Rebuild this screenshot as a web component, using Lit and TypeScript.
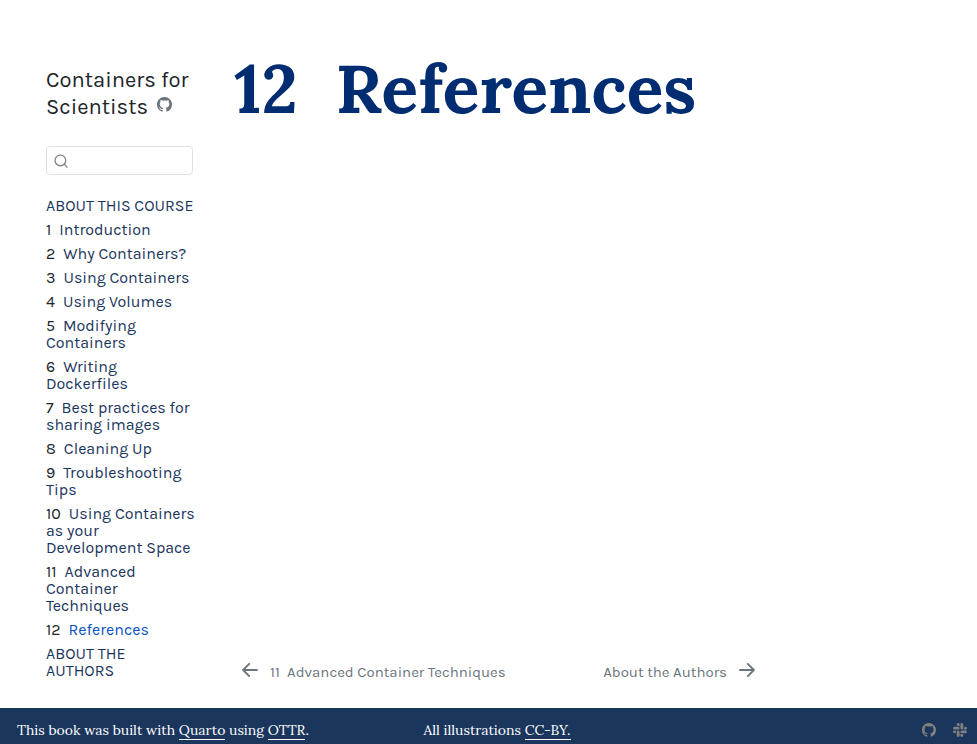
import { LitElement, html, css, svg } from "lit";
import { customElement } from "lit/decorators.js";

interface Chapter {
  num?: string;
  title: string;
  active?: boolean;
}

const chapters: Chapter[] = [
  { title: "ABOUT THIS COURSE" },
  { num: "1", title: "Introduction" },
  { num: "2", title: "Why Containers?" },
  { num: "3", title: "Using Containers" },
  { num: "4", title: "Using Volumes" },
  { num: "5", title: "Modifying Containers" },
  { num: "6", title: "Writing Dockerfiles" },
  { num: "7", title: "Best practices for sharing images" },
  { num: "8", title: "Cleaning Up" },
  { num: "9", title: "Troubleshooting Tips" },
  { num: "10", title: "Using Containers as your Development Space" },
  { num: "11", title: "Advanced Container Techniques" },
  { num: "12", title: "References", active: true },
  { title: "ABOUT THE AUTHORS" },
];

const githubPath = svg`<path d="M8 0C3.58 0 0 3.58 0 8c0 3.54 2.29 6.53 5.47 7.59.4.07.55-.17.55-.38 0-.19-.01-.82-.01-1.49-2.01.37-2.53-.49-2.69-.94-.09-.23-.48-.94-.82-1.13-.28-.15-.68-.52-.01-.53.63-.01 1.08.58 1.23.82.72 1.21 1.87.87 2.33.66.07-.52.28-.87.51-1.07-1.78-.2-3.64-.89-3.64-3.95 0-.87.31-1.59.82-2.15-.08-.2-.36-1.02.08-2.12 0 0 .67-.21 2.2.82.64-.18 1.32-.27 2-.27s1.36.09 2 .27c1.53-1.04 2.2-.82 2.2-.82.44 1.1.16 1.92.08 2.12.51.56.82 1.27.82 2.15 0 3.07-1.87 3.75-3.65 3.95.29.25.54.73.54 1.48 0 1.07-.01 1.93-.01 2.2 0 .21.15.46.55.38A8.01 8.01 0 0 0 16 8c0-4.42-3.58-8-8-8"/>`;
const slackPath = svg`<path d="M3.362 10.11c0 .926-.756 1.681-1.681 1.681S0 11.036 0 10.111.756 8.43 1.68 8.43h1.682zm.846 0c0-.924.756-1.68 1.681-1.68s1.681.756 1.681 1.68v4.21c0 .924-.756 1.68-1.68 1.68a1.685 1.685 0 0 1-1.682-1.68zM5.89 3.362c-.926 0-1.682-.756-1.682-1.681S4.964 0 5.89 0s1.68.756 1.68 1.68v1.682zm0 .846c.924 0 1.68.756 1.68 1.681S6.814 7.57 5.89 7.57H1.68C.757 7.57 0 6.814 0 5.89c0-.926.756-1.682 1.68-1.682zm6.749 1.682c0-.926.755-1.682 1.68-1.682S16 4.964 16 5.889s-.756 1.681-1.68 1.681h-1.681zm-.848 0c0 .924-.755 1.68-1.68 1.68A1.685 1.685 0 0 1 8.43 5.89V1.68C8.43.757 9.186 0 10.11 0c.926 0 1.681.756 1.681 1.68zm-1.681 6.748c.926 0 1.682.756 1.682 1.681S11.036 16 10.11 16s-1.681-.756-1.681-1.68v-1.682h1.68zm0-.847c-.924 0-1.68-.755-1.68-1.68s.756-1.681 1.68-1.681h4.21c.924 0 1.68.756 1.68 1.68 0 .926-.756 1.681-1.68 1.681z"/>`;
const leftPath = svg`<path fill="none" stroke="currentColor" stroke-width="1.9" stroke-linecap="round" stroke-linejoin="round" d="M15 8H1.6M7.2 1.9 1.1 8l6.1 6.1"/>`;
const rightPath = svg`<path fill="none" stroke="currentColor" stroke-width="1.9" stroke-linecap="round" stroke-linejoin="round" d="M1 8h13.4M8.8 1.9 14.9 8l-6.1 6.1"/>`;
const searchPath = svg`<g fill="none" stroke="currentColor" stroke-width="1.5" stroke-linecap="round"><circle cx="7.3" cy="7.3" r="6.1"/><path d="M11.8 11.8 15 15"/></g>`;

const icon = (body: unknown) =>
  html`<svg class="icon" viewBox="0 0 16 16" aria-hidden="true">${body}</svg>`;

@customElement("app-root")
export class AppRoot extends LitElement {
  static styles = css`
    :host {
      display: flex;
      flex-direction: column;
      min-height: 100vh;
      background: #fff;
      color: #212529;
      font-family: Karla, Roboto, sans-serif;
      font-size: 16px;
    }
    * {
      box-sizing: border-box;
    }
    a {
      color: inherit;
      text-decoration: none;
    }
    .icon {
      display: block;
      width: 15px;
      height: 15px;
      fill: currentColor;
    }
    .layout {
      flex: 1;
      display: grid;
      grid-template-columns: 150px minmax(0, 528px);
      column-gap: 38px;
      padding: 0 46px;
    }
    .sidebar {
      padding: 67px 0 28px;
    }
    .brand {
      font-size: 22px;
      line-height: 27px;
      margin-bottom: 25px;
    }
    .tool {
      display: inline-block;
      vertical-align: 2px;
      margin-left: 4px;
      color: #6c757d;
    }
    .search {
      display: flex;
      align-items: center;
      height: 29px;
      padding: 0 7px;
      border: 1px solid #dee2e6;
      border-radius: 4px;
      color: #828282;
      margin: 0 3px 22px 0;
    }
    .search .icon {
      flex: none;
      width: 14px;
      height: 14px;
    }
    .search input {
      min-width: 0;
      flex: 1;
      border: 0;
      outline: 0;
      background: none;
      font: inherit;
    }
    .chapters {
      list-style: none;
      margin: 0;
      padding: 0;
      display: flex;
      flex-direction: column;
      gap: 7px;
      line-height: 17px;
    }
    .chapters a {
      color: #1b365d;
    }
    .chapters .active {
      color: #0a53be;
    }
    .chapters .num {
      color: #212529;
      margin-right: 8px;
    }
    .content {
      display: flex;
      flex-direction: column;
      justify-content: space-between;
    }
    h1 {
      margin: 41px 0 0;
      color: #002d72;
      font: 700 68px/96px Lora, "Liberation Serif", serif;
      white-space: nowrap;
    }
    h1 .chapter {
      margin-right: 38px;
    }
    .pager {
      display: flex;
      justify-content: space-between;
      padding: 0 7px 26px 8px;
      color: #6c757d;
      font-size: 15px;
      line-height: 20px;
    }
    .pager a {
      display: flex;
      gap: 12px;
    }
    .pager .icon {
      width: 16px;
      height: 16px;
    }
    .footer {
      display: grid;
      grid-template-columns: 1fr auto 1fr;
      min-height: 36px;
      padding: 12px 0 4px 17px;
      background: #1b365d;
      color: #fff;
      font: 14px/20px Lora, "Liberation Serif", serif;
    }
    .footer .link {
      border-bottom: 1px solid #fff;
    }
    .social {
      display: flex;
      justify-content: flex-end;
      gap: 17px;
      padding: 3px 10px 0 0;
      color: #808080;
    }
    .social .icon {
      width: 14px;
      height: 14px;
    }
  `;

  render() {
    return html`
      <div class="layout">
        <nav class="sidebar" aria-label="Chapters">
          <div class="brand">
            <a href="#">Containers for Scientists</a>
            <a class="tool" href="#" aria-label="Source Code">${icon(githubPath)}</a>
          </div>
          <label class="search">
            ${icon(searchPath)}
            <input type="text" aria-label="Search" />
          </label>
          <ul class="chapters">
            ${chapters.map(
              (c) => html`<li>
                <a href="#" class=${c.active ? "active" : ""}
                  >${c.num ? html`<span class="num">${c.num}</span>` : ""}${c.title}</a
                >
              </li>`
            )}
          </ul>
        </nav>
        <main class="content">
          <h1><span class="chapter">12</span>References</h1>
          <nav class="pager" aria-label="Pages">
            <a href="#">${icon(leftPath)}<span>11&nbsp; Advanced Container Techniques</span></a>
            <a href="#"><span>About the Authors</span>${icon(rightPath)}</a>
          </nav>
        </main>
      </div>
      <footer class="footer">
        <div>This book was built with <a class="link" href="#">Quarto</a> using <a class="link" href="#">OTTR</a>.</div>
        <div>All illustrations <a class="link" href="#">CC-BY.</a></div>
        <div class="social">
          <a href="#" aria-label="GitHub">${icon(githubPath)}</a>
          <a href="#" aria-label="Slack">${icon(slackPath)}</a>
        </div>
      </footer>
    `;
  }
}
